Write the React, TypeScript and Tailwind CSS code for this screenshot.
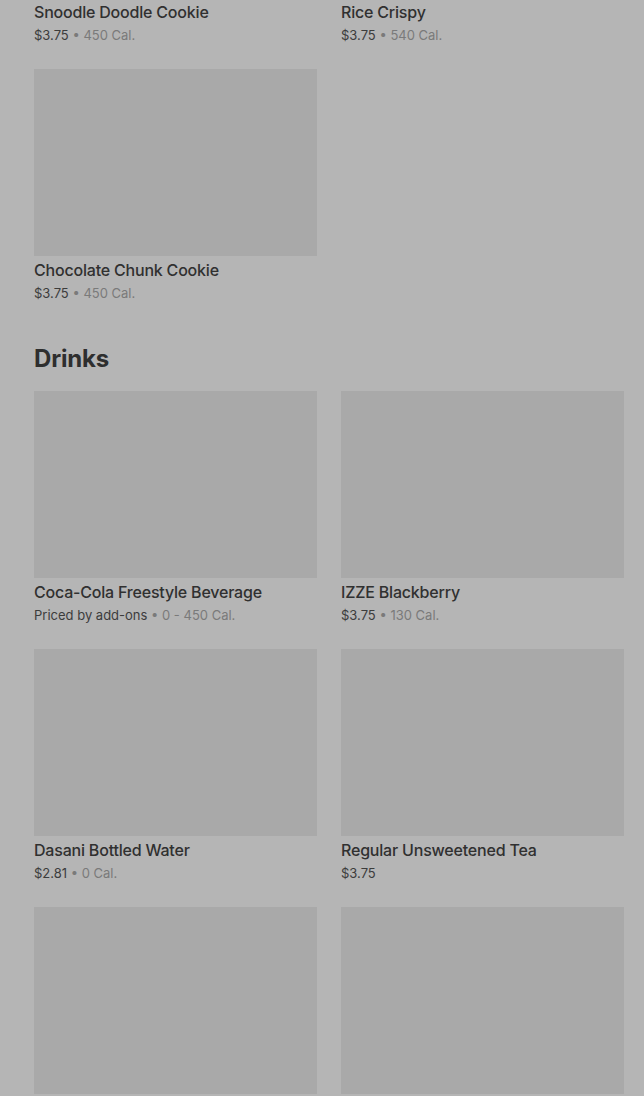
import React from "react";

type Item = { name?: string; price?: string; cal?: string };

const cookies: Item[] = [
  { name: "Snoodle Doodle Cookie", price: "$3.75", cal: "450 Cal." },
  { name: "Rice Crispy", price: "$3.75", cal: "540 Cal." },
  { name: "Chocolate Chunk Cookie", price: "$3.75", cal: "450 Cal." },
];

const drinks: Item[] = [
  { name: "Coca-Cola Freestyle Beverage", price: "Priced by add-ons", cal: "0 - 450 Cal." },
  { name: "IZZE Blackberry", price: "$3.75", cal: "130 Cal." },
  { name: "Dasani Bottled Water", price: "$2.81", cal: "0 Cal." },
  { name: "Regular Unsweetened Tea", price: "$3.75" },
  {},
  {},
];

function Card({ item }: { item: Item }) {
  return (
    <div className="flex flex-col">
      <div className="h-[187px] w-full bg-[#a9a9a9]" />
      {item.name && (
        <>
          <div className="mt-[2px] text-[16px] leading-6 font-medium tracking-[-0.2px] text-[#303030] truncate">
            {item.name}
          </div>
          <div className="mt-[1px] text-[13px] leading-5 text-[#3c3c3c]">
            <span>{item.price}</span>
            {item.cal && (
              <>
                <span className="text-[#7a7a7a]"> • </span>
                <span className="text-[#7a7a7a]">{item.cal}</span>
              </>
            )}
          </div>
        </>
      )}
    </div>
  );
}

export default function App() {
  return (
    <div
      className="h-[1096px] w-[644px] overflow-hidden bg-[#b5b5b5] pl-[34px] pr-[20px]"
      style={{ fontFamily: "Inter, 'Liberation Sans', sans-serif" }}
    >
      <div className="-mt-[189px]">
        <div className="grid grid-cols-2 gap-x-6 gap-y-[24px]">
          {cookies.map((c, i) => (
            <Card key={i} item={c} />
          ))}
        </div>
        <h2 className="mt-[40px] mb-[16px] text-[24px] leading-8 font-bold text-[#2e2e2e] tracking-[-0.2px]">
          Drinks
        </h2>
        <div className="grid grid-cols-2 gap-x-6 gap-y-[24px]">
          {drinks.map((c, i) => (
            <Card key={i} item={c} />
          ))}
        </div>
      </div>
    </div>
  );
}
